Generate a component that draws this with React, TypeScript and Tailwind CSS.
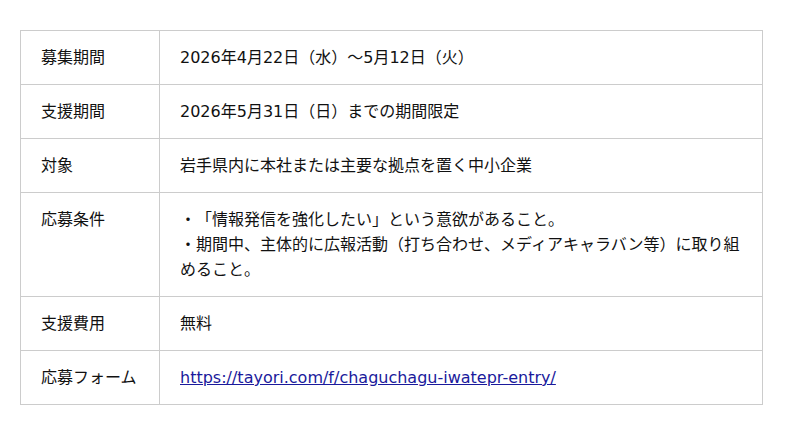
const rows: { label: string; value: React.ReactNode }[] = [
  { label: '募集期間', value: '2026年4月22日（水）〜5月12日（火）' },
  { label: '支援期間', value: '2026年5月31日（日）までの期間限定' },
  { label: '対象', value: '岩手県内に本社または主要な拠点を置く中小企業' },
  {
    label: '応募条件',
    value: (
      <>
        ・「情報発信を強化したい」という意欲があること。
        <br />
        ・期間中、主体的に広報活動（打ち合わせ、メディアキャラバン等）に取り組めること。
      </>
    ),
  },
  { label: '支援費用', value: '無料' },
  {
    label: '応募フォーム',
    value: (
      <a href="#" className="text-[#1a1a9c] underline">
        https://tayori.com/f/chaguchagu-iwatepr-entry/
      </a>
    ),
  },
];

export default function App() {
  return (
    <div
      className="bg-white w-[800px] h-[435px] pt-[30px] pl-[20px] text-[#111] text-[16px] leading-[25px] [text-spacing-trim:space-all]"
      style={{ fontFamily: '"DejaVu Sans", "Noto Sans CJK JP", sans-serif' }}
    >
      <table className="w-[743px] border-collapse table-fixed">
        <tbody>
          {rows.map((r) => (
            <tr key={r.label}>
              <td className="w-[139px] border border-[#cccccc] px-[20px] py-[14px] align-top">
                {r.label}
              </td>
              <td className="border border-[#cccccc] px-[20px] py-[14px] align-top">
                {r.value}
              </td>
            </tr>
          ))}
        </tbody>
      </table>
    </div>
  );
}
